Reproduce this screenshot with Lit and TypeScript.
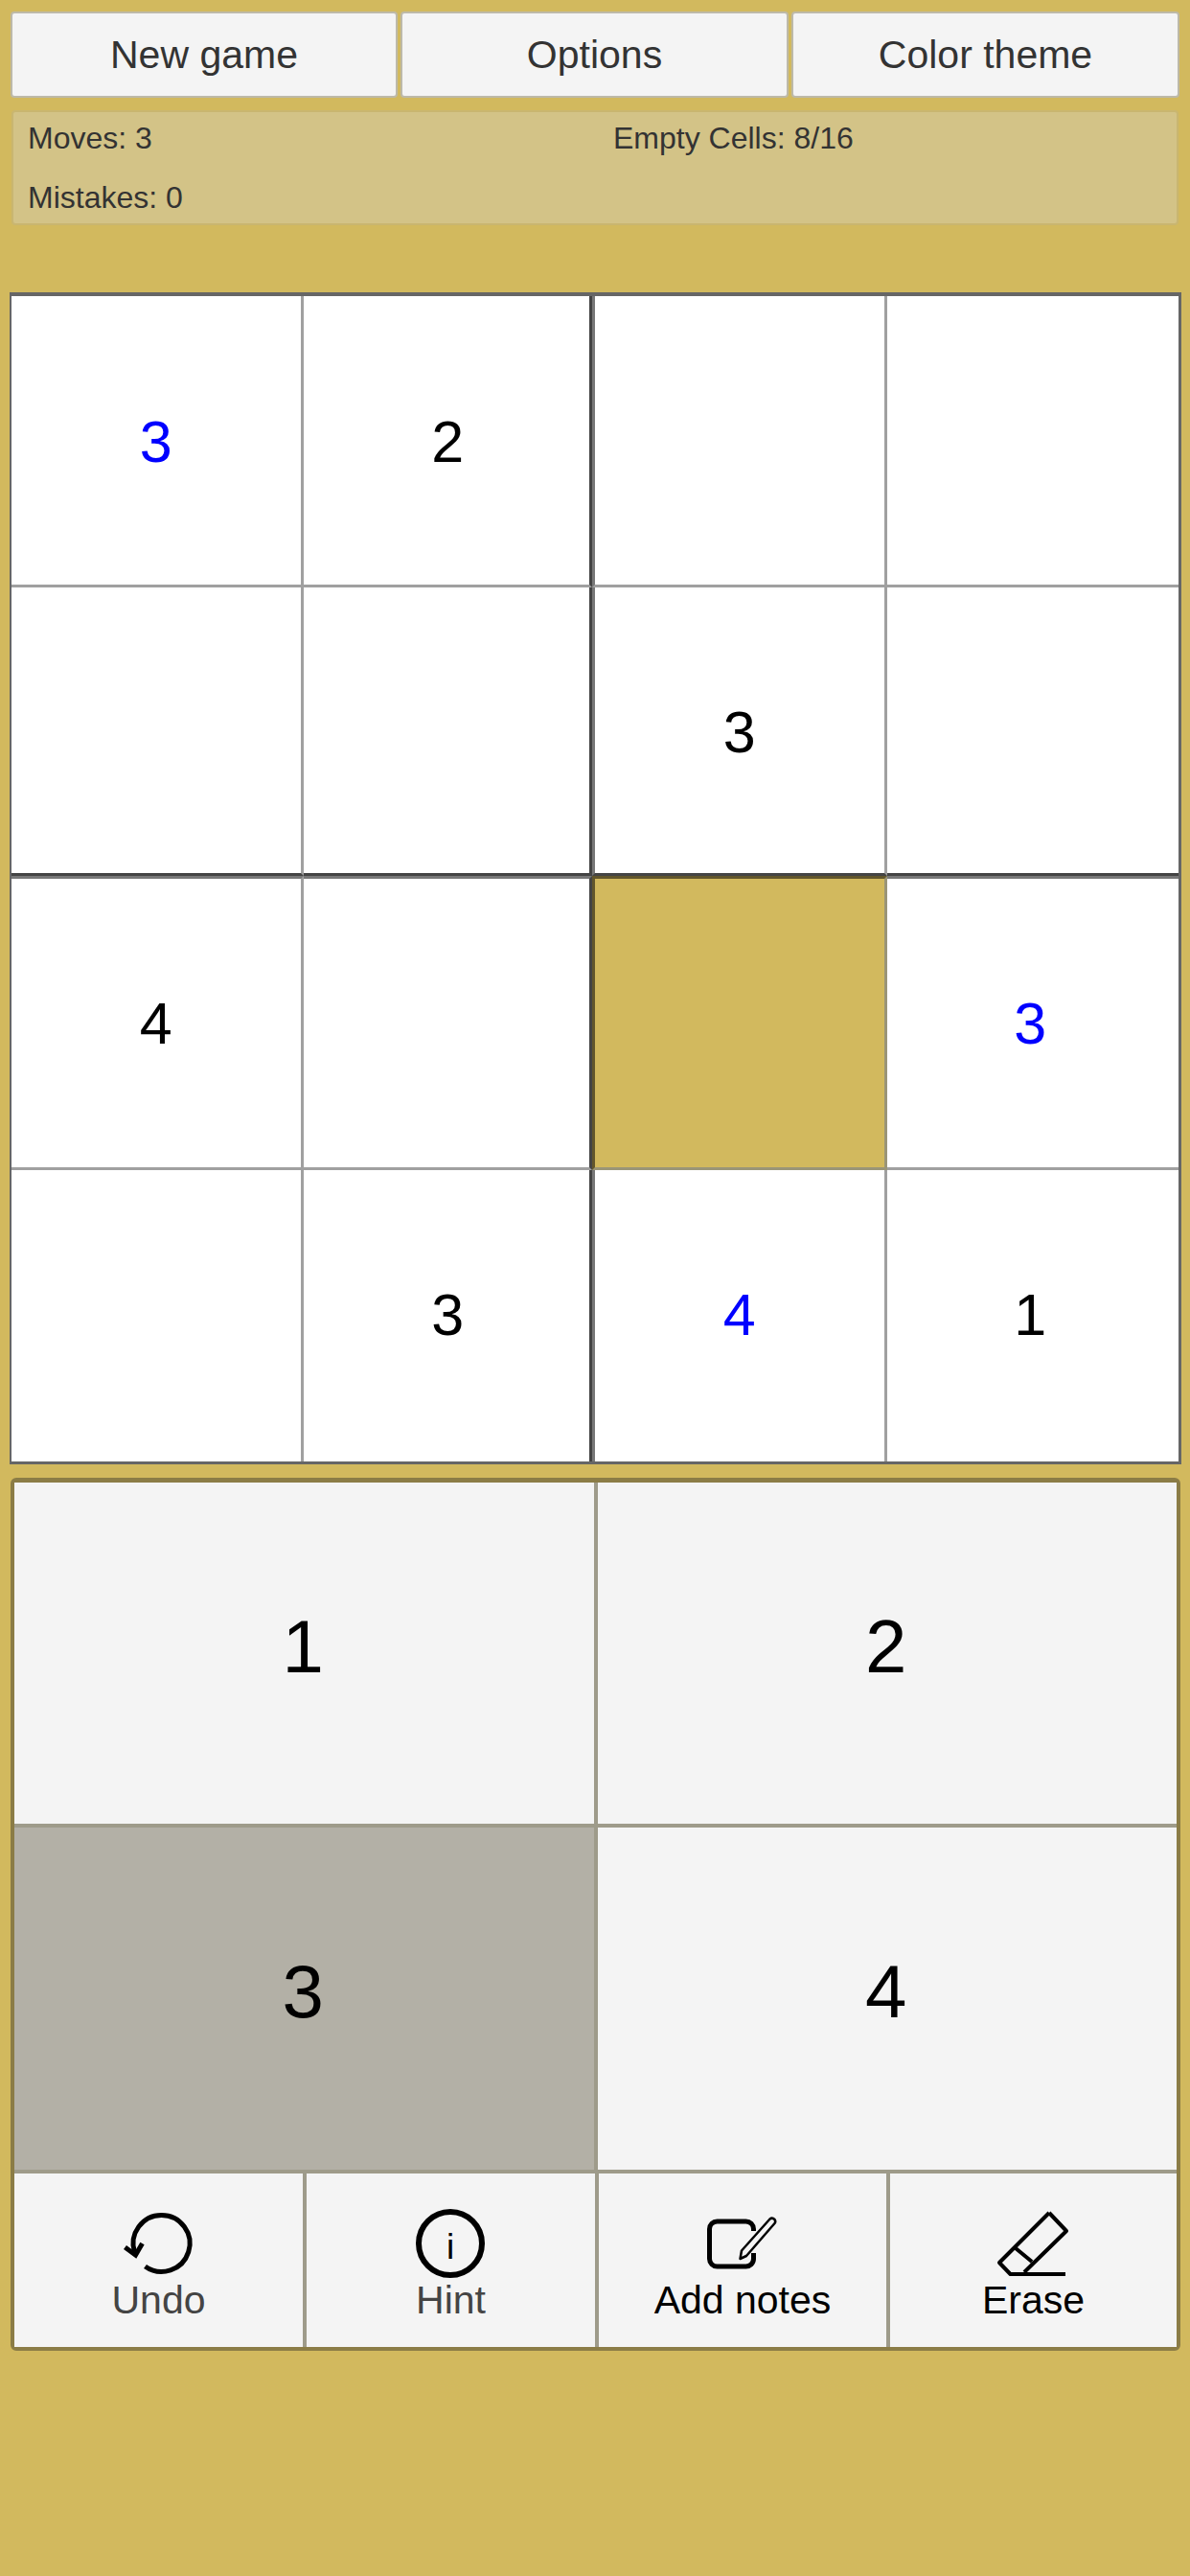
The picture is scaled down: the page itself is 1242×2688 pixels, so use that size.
import { LitElement, html, css, svg } from "lit";
import { customElement } from "lit/decorators.js";

const ICONS: Record<string, unknown> = {
  undo: svg`<path d="M25.5 64A29.5 29.5 0 1 0 14.500 49" fill="none" stroke="#000" stroke-width="5"/><path d="M4.5 44 15.500 52 22.500 40" fill="none" stroke="#000" stroke-width="5"/>`,
  hint: svg`<circle cx="39" cy="40" r="33" fill="none" stroke="#000" stroke-width="6"/><text x="39" y="56" text-anchor="middle" font-family="Liberation Sans" font-size="37" fill="#000">i</text>`,
  notes: svg`<g transform="translate(-3 0)"><path d="M54.5 27V25a8 8 0 0 0-8-8H16.500a8 8 0 0 0-8 8V56a8 8 0 0 0 8 8H46a8 8 0 0 0 8.500-8V50" fill="none" stroke="#000" stroke-width="5"/><path d="M40.500 56 42 47.500 71.500 14.500Q74 12.500 76.500 15 78 17 76.500 19L47 53Z" fill="none" stroke="#000" stroke-width="2.500" stroke-linejoin="round"/></g>`,
  erase: svg`<path d="M56 8 74 27 30 70M56 8 4 60 15.500 72H73M21 45 38 59" fill="none" stroke="#000" stroke-width="4" stroke-linejoin="round"/>`,
};

const CELLS: [string, string][] = [
  ["3", "blue"], ["2", ""], ["", ""], ["", ""],
  ["", ""], ["", ""], ["3", ""], ["", ""],
  ["4", ""], ["", ""], ["", "sel"], ["3", "blue"],
  ["", ""], ["3", ""], ["4", "blue"], ["1", ""],
];

@customElement("app-root")
export class AppRoot extends LitElement {
  static styles = css`
    :host {
      display: block;
      width: 1242px;
      height: 2688px;
      overflow: hidden;
      background: #d2b95e;
      font-family: "Liberation Sans", Arial, sans-serif;
      color: #333;
      box-sizing: border-box;
    }
    * { box-sizing: border-box; }
    .top {
      display: grid;
      grid-template-columns: 404px 405px 405px;
      column-gap: 3px;
      margin: 12px 11px 0;
      height: 90px;
    }
    .top div {
      background: #f4f4f4;
      border-radius: 4px;
      border: 2px solid #bdb9a8;
      display: flex;
      align-items: center;
      justify-content: center;
      font-size: 41px;
      color: #333;
    }
    .info {
      margin: 13px 12px 0;
      height: 120px;
      background: #d3c387;
      border: 2px solid #c9b670;
      border-radius: 4px;
      display: grid;
      grid-template-columns: 1fr 1fr;
      grid-template-rows: 62px 62px;
      align-content: center;
      font-size: 32px;
      line-height: 62px;
      color: #333;
    }
    .info span { padding-left: 15px; }
    .info span:nth-child(2) { padding-left: 19px; }
    .board {
      margin: 70px 0 0 10px;
      width: 1223px;
      height: 1223px;
      border: solid #666;
      border-width: 4px 3px 3px 2px;
      display: grid;
      grid-template-columns: 304.5px 301.5px 307.5px 304.5px;
      grid-template-rows: 304px 301px 307px 304px;
      background: #fff;
    }
    .cell {
      display: flex;
      align-items: center;
      justify-content: center;
      font-size: 61px;
      color: #000;
      border-right: 3px solid #a0a0a0;
      border-bottom: 3px solid #a0a0a0;
    }
    .cell:nth-child(4n) { border-right: 0; padding-right: 5px; }
    .cell:nth-child(4n + 2) { border-right-color: #444; padding-left: 3px; }
    .cell:nth-child(-n + 4) { padding-top: 2px; }
    .cell:nth-child(n + 5):nth-child(-n + 8) { padding-top: 4px; }
    .cell:nth-child(n + 13) { border-bottom: 0; padding-bottom: 3px; }
    .cell:nth-child(4n + 3) { border-left: 3px solid rgba(0, 0, 0, 0.53); }
    .cell:nth-child(n + 5):nth-child(-n + 8) { border-bottom-color: #444; }
    .cell:nth-child(n + 9):nth-child(-n + 12) { border-top: 3px solid rgba(0, 0, 0, 0.53); }
    .blue { color: #0000ff; }
    .cell.sel {
      background: #d2b95e;
      border-right-color: #9a9577;
      border-bottom-color: #9a9577;
    }
    .pad {
      margin: 14px 0 0 11px;
      width: 1221px;
      height: 911px;
      border: solid #8b7c46;
      border-width: 5px 4px 4px 4px;
      border-radius: 6px;
      background: #9e9b8a;
      display: grid;
      grid-template-rows: 356px 357px 181px;
      row-gap: 4px;
    }
    .row2 {
      display: grid;
      grid-template-columns: 1fr 1fr;
      column-gap: 4px;
    }
    .num {
      background: #f4f4f4;
      color: #000;
      display: flex;
      align-items: center;
      justify-content: center;
      font-size: 78px;
      padding: 0 2px 14px 0;
    }
    .num.on { background: #b3b0a6; }
    .tools {
      display: grid;
      grid-template-columns: 301px 301px 300px 299px;
      column-gap: 4px;
    }
    .tool {
      background: #f4f4f4;
      display: flex;
      flex-direction: column;
      align-items: center;
      padding-top: 33px;
      font-size: 41px;
      line-height: 46px;
      color: #000;
    }
    .tool.dim { color: #444; }
    .tool svg { width: 80px; height: 76px; display: block; }
  `;

  private tool(id: string, label: string, dim: boolean) {
    return html`<div class="tool ${dim ? "dim" : ""}">
      <svg viewBox="0 0 80 76">${ICONS[id]}</svg>${label}
    </div>`;
  }

  render() {
    return html`
      <div class="top"><div>New game</div><div>Options</div><div>Color theme</div></div>
      <div class="info">
        <span>Moves: 3</span><span>Empty Cells: 8/16</span><span>Mistakes: 0</span>
      </div>
      <div class="board">
        ${CELLS.map(([v, c]) => html`<div class="cell ${c}">${v}</div>`)}
      </div>
      <div class="pad">
        <div class="row2">
          <div class="num">1</div><div class="num">2</div>
        </div>
        <div class="row2">
          <div class="num on">3</div><div class="num">4</div>
        </div>
        <div class="tools">
          ${this.tool("undo", "Undo", true)}
          ${this.tool("hint", "Hint", true)}
          ${this.tool("notes", "Add notes", false)}
          ${this.tool("erase", "Erase", false)}
        </div>
      </div>
    `;
  }
}
